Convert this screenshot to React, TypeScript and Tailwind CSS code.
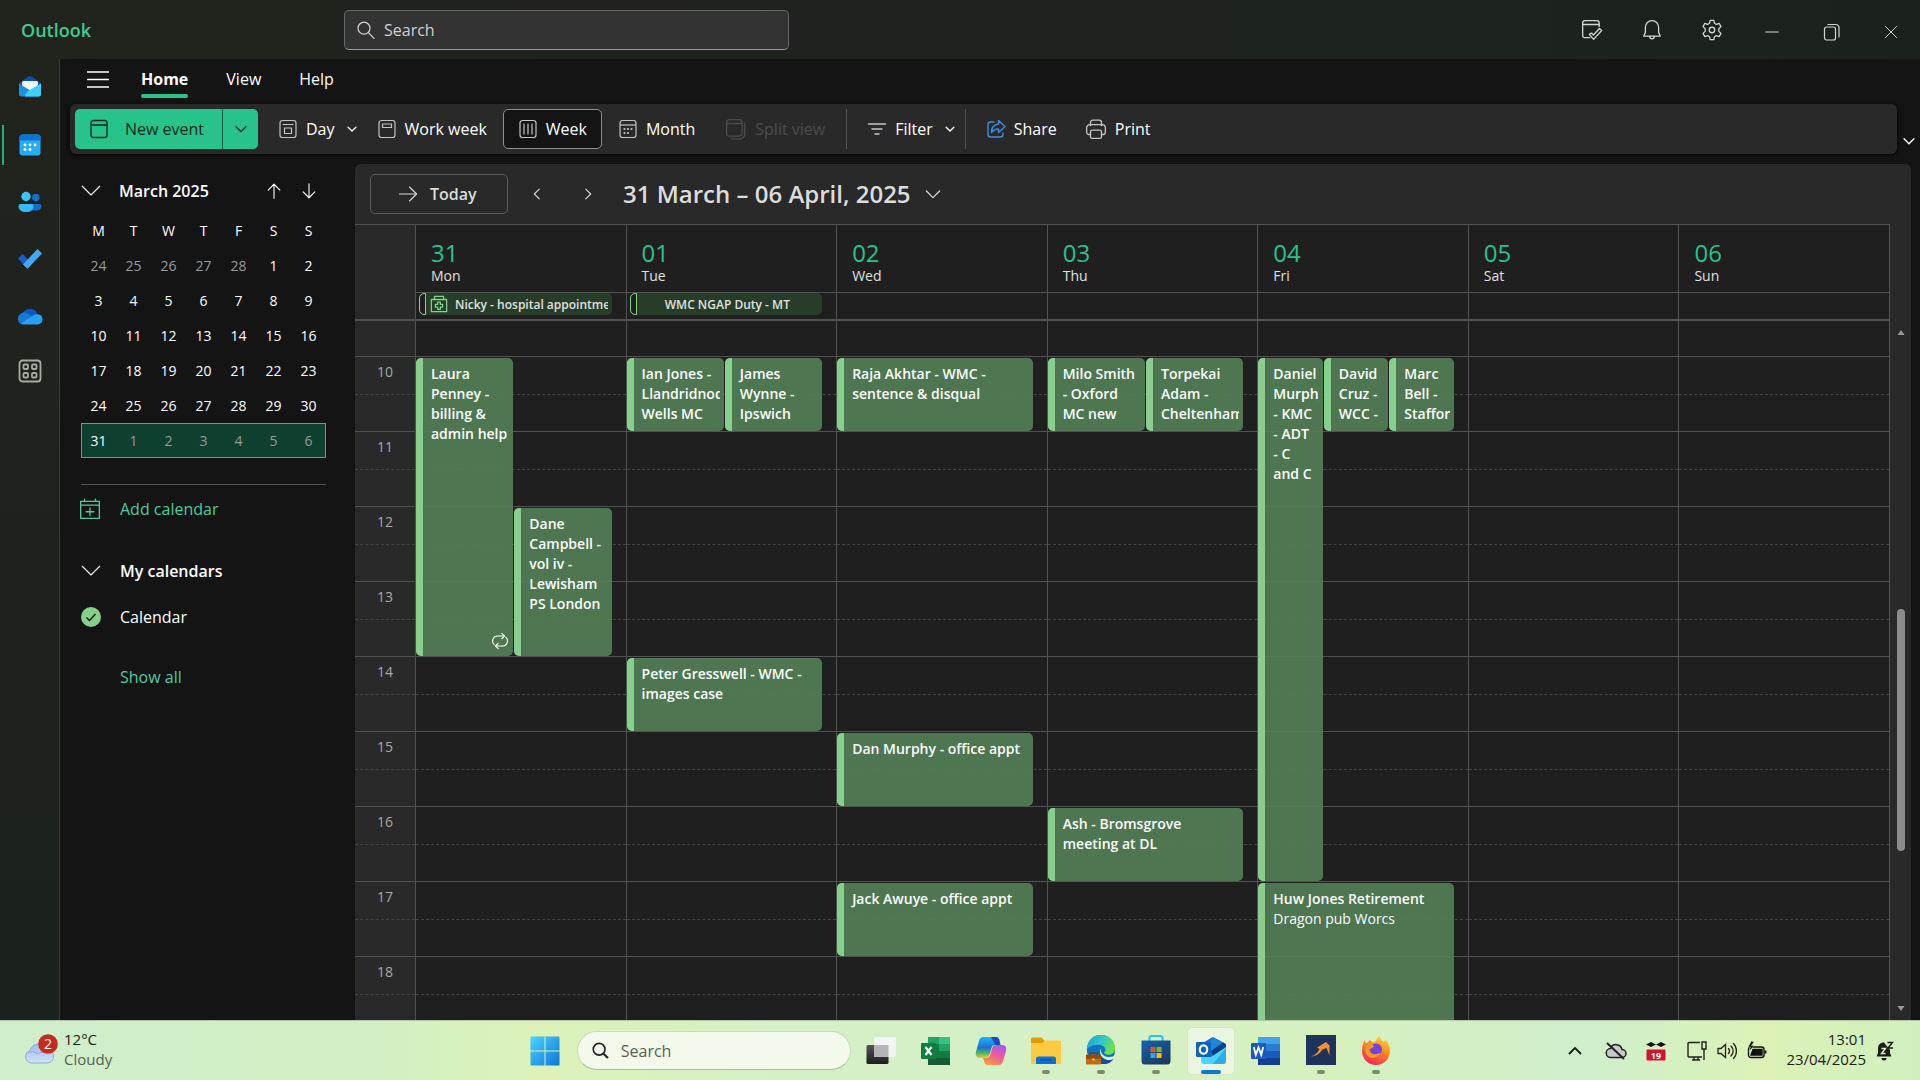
import React from "react";

type P = { d: string | string[]; s?: number; w?: number; c?: string };

function Line({ d, s = 20, w = 1.2, c = "" }: P) {
  const paths = Array.isArray(d) ? d : [d];
  return (
    <svg width={s} height={s} viewBox="0 0 20 20" fill="none" stroke="currentColor" strokeWidth={w} strokeLinecap="round" strokeLinejoin="round" className={"shrink-0 " + c} aria-hidden="true">
      {paths.map((p, i) => (
        <path key={i} d={p} />
      ))}
    </svg>
  );
}

const FRAME = "M4.5 1.5h11a2.5 2.5 0 0 1 2.5 2.5v12a2.5 2.5 0 0 1-2.5 2.5h-11A2.5 2.5 0 0 1 2 16V4a2.5 2.5 0 0 1 2.5-2.5z";
const I = {
  search: ["M8 2.2a6 6 0 1 1 0 12a6 6 0 0 1 0-12z", "M12.4 12.6L18 18.4"],
  down: "M4.5 7.5L10 13l5.5-5.5",
  left: "M12.5 4.5L7 10l5.5 5.5",
  right: "M7.5 4.5L13 10l-5.5 5.5",
  up: "M4.5 12.5L10 7l5.5 5.5",
  arrowRight: ["M1.5 10h17", "M11.5 3l7 7l-7 7"],
  arrowUp: ["M10 18V2.5", "M3.5 9L10 2.5L16.500 9"],
  arrowDown: ["M10 2v15.500", "M3.500 11L10 17.500L16.500 11"],
  cal: [FRAME, "M2 6h16"],
  day: [FRAME, "M5 5.500h10", "M6.500 9h7v5.500h-7z"],
  workWeek: [FRAME, "M5.500 5h9v3.500h-9z"],
  week: [FRAME, "M6 5v10M10 5v10M14 5v10"],
  split: ["M4 1.500h9a2.500 2.500 0 0 1 2.500 2.500v10a2.500 2.500 0 0 1-2.500 2.500H4A2.500 2.500 0 0 1 1.500 14V4A2.500 2.500 0 0 1 4 1.500z", "M1.500 5h14", "M18 4.500v10a4.500 4.500 0 0 1-4.500 4.500H6"],
  filter: ["M1.500 5h17", "M5 10h10", "M8 15h4"],
  share: ["M8 3H4.500A2.500 2.500 0 0 0 2 5.500v10A2.500 2.500 0 0 0 4.500 18h10a2.500 2.500 0 0 0 2.500-2.500V14", "M12.500 1.500L19 7.500l-6.500 6V10c-3 0-5 1-7 3.500C5.500 8.500 8 5.500 12.500 5z"],
  print: ["M5 7V4a2 2 0 0 1 2-2h6a2 2 0 0 1 2 2v3", "M5 15H3.500A2 2 0 0 1 1.500 13V9A3 3 0 0 1 4.500 6h11a3 3 0 0 1 3 3v4a2 2 0 0 1-2 2H15", "M6.500 11h7A1.500 1.500 0 0 1 15 12.500V17a1.500 1.500 0 0 1-1.500 1.500h-7A1.500 1.500 0 0 1 5 17v-4.500A1.500 1.500 0 0 1 6.500 11z"],
  myDay: ["M8 17H3.500A2 2 0 0 1 1.500 15V3.500a2 2 0 0 1 2-2h11a2 2 0 0 1 2 2V7", "M1.500 5h15", "M7.500 14l2-1.200l1.800 1.800l5.500-6L18.800 10.500L11.500 18.500z"],
  bell: ["M10 1.500a6 6 0 0 0-6 6V12l-1.500 3.500h15L16 12V7.500a6 6 0 0 0-6-6z", "M8 16a2 2 0 0 0 4 0"],
  min: "M3 10h14",
  restore: ["M4.500 5h7a2 2 0 0 1 2 2v9a2 2 0 0 1-2 2h-7a2 2 0 0 1-2-2V7a2 2 0 0 1 2-2z", "M6 2.500h7.500a3.500 3.500 0 0 1 3.500 3.500v9"],
  close: "M3 3l14 14M17 3L3 17",
  addCal: ["M1.500 3h17v15.500h-17z", "M1.500 6.500h17", "M5 1v2M15 1v2", "M10 9v7M6.500 12.500h7"],
  repeat: ["M12 1.500l3 3l-3 3", "M15 4.500H7.500A5.500 5.500 0 0 0 3.500 14", "M8 18.500l-3-3l3-3", "M5 15.500h7.500A5.500 5.500 0 0 0 16.500 6"],
  medical: ["M1.500 5h17v13.500h-17z", "M5 5V1.500h10V5", "M8.500 8h3v2.500H14v3h-2.500V16h-3v-2.500H6v-3h2.500z"],
};

function Gear() {
  return (
    <svg width="22" height="22" viewBox="0 0 24 24" fill="none" stroke="currentColor" strokeWidth="1.400" strokeLinejoin="round" aria-hidden="true">
      <path d="M10 1.500h4l.7 3.200l2 1.100l3.100-1l2 3.500L19.400 10.500v3l2.400 2.200l-2 3.500l-3.100-1l-2 1.100L14 22.500h-4l-.7-3.200l-2-1.100l-3.100 1l-2-3.500l2.400-2.200v-3L2.200 8.300l2-3.500l3.100 1l2-1.100z" />
      <circle cx="12" cy="12" r="3" />
    </svg>
  );
}

function MonthDots() {
  return (
    <svg width="20" height="20" viewBox="0 0 20 20" fill="none" stroke="currentColor" strokeWidth="1.200" aria-hidden="true">
      <path d={FRAME} />
      <path d="M2 6h16" />
      <g fill="currentColor" stroke="none">
        <circle cx="6.500" cy="10" r="1.100" /><circle cx="10" cy="10" r="1.100" /><circle cx="13.500" cy="10" r="1.100" />
        <circle cx="6.500" cy="14" r="1.100" /><circle cx="10" cy="14" r="1.100" />
      </g>
    </svg>
  );
}

/* ---------- App rail ---------- */
function RailIcons() {
  return [
    <svg key="mail" width="24" height="24" viewBox="0 0 24 24">
      <path d="M1 9L10.500 2.500a3 3 0 0 1 3 0L23 9v7H1z" fill="#0b4fae" />
      <rect x="4" y="7" width="16" height="11" rx="1.500" fill="#f4f8ff" />
      <path d="M1 9.500l11 6.500l11-6.500V20a2.500 2.500 0 0 1-2.500 2.500h-17A2.500 2.500 0 0 1 1 20z" fill="#1a8fe3" />
      <path d="M5 8h14v4l-7 4l-7-4z" fill="#f4f8ff" />
      <path d="M23 9.500V20a2.500 2.500 0 0 1-2.500 2.500H7c0-3 2-5 5-6.500z" fill="#3fd0fb" />
    </svg>,
    <svg key="cal" width="24" height="24" viewBox="0 0 24 24">
      <rect x="1.500" y="1.500" width="21" height="21" rx="3" fill="#22aef5" />
      <path d="M1.500 7.500v-3a3 3 0 0 1 3-3h15a3 3 0 0 1 3 3v3z" fill="#0f73d4" />
      <g fill="#fff">
        <circle cx="7" cy="12" r="1.400" /><circle cx="12" cy="12" r="1.400" /><circle cx="17" cy="12" r="1.400" />
        <circle cx="7" cy="16.500" r="1.400" /><circle cx="12" cy="16.500" r="1.400" />
      </g>
    </svg>,
    <svg key="people" width="24" height="24" viewBox="0 0 24 24">
      <circle cx="17.800" cy="7.500" r="3.700" fill="#0b6fd0" />
      <path d="M13 14h8.500a2 2 0 0 1 2 2c0 3-2.500 4.500-5.500 4.500h-5z" fill="#0b6fd0" />
      <circle cx="8" cy="6.500" r="4.700" fill="#3cc3fa" />
      <path d="M2.500 14h11a2 2 0 0 1 2 2c0 4-3 6-7.500 6s-7.500-2-7.500-6a2 2 0 0 1 2-2z" fill="#35b9f5" />
    </svg>,
    <svg key="todo" width="26" height="24" viewBox="0 0 26 24">
      <path d="M1 11.500L5.500 7L14.500 16L10 21.500z" fill="#1c5bc2" />
      <path d="M6 17.500L20.500 2L25 6.500L10.500 21.800z" fill="#46a8f5" />
    </svg>,
    <svg key="drive" width="26" height="24" viewBox="0 0 26 24">
      <path d="M5 12a8 7.500 0 0 1 15.500-2L13 16z" fill="#0a5bbd" />
      <path d="M1 15.500A6 6 0 0 1 10 9.500L18 14L6 20.500A5 5 0 0 1 1 15.500z" fill="#1679d8" />
      <path d="M4 19.500L17 11a6 6 0 0 1 4-.8a5.200 5.200 0 0 1 0 10.300H6.500z" fill="#2a9fee" />
    </svg>,
    <svg key="apps" width="24" height="24" viewBox="0 0 24 24" fill="none" stroke="#a8aaa4" strokeWidth="1.800">
      <rect x="1.500" y="1.500" width="21" height="21" rx="3" />
      <rect x="5.500" y="5.500" width="4.500" height="4.500" rx="1" /><rect x="14" y="5.500" width="4.500" height="4.500" rx="1" />
      <rect x="5.500" y="14" width="4.500" height="4.500" rx="1" /><rect x="14" y="14" width="4.500" height="4.500" rx="1" />
    </svg>,
  ];
}
const railNames = ["Mail", "Calendar", "People", "To Do", "OneDrive", "More apps"];

/* ---------- Data ---------- */
const month: string[][] = [
  ["24", "25", "26", "27", "28", "1", "2"],
  ["3", "4", "5", "6", "7", "8", "9"],
  ["10", "11", "12", "13", "14", "15", "16"],
  ["17", "18", "19", "20", "21", "22", "23"],
  ["24", "25", "26", "27", "28", "29", "30"],
  ["31", "1", "2", "3", "4", "5", "6"],
];

type Ev = { t: string; place?: string; from: number; to: number; lane?: number; span?: number; repeat?: boolean };
type Day = { n: string; name: string; lanes: number; allDay?: { t: string; icon?: boolean }; ev: Ev[] };

const days: Day[] = [
  { n: "31", name: "Mon", lanes: 2, allDay: { t: "Nicky - hospital appointment", icon: true }, ev: [
    { t: "Laura Penney - billing & admin help", from: 10, to: 14, repeat: true },
    { t: "Dane Campbell - vol iv - Lewisham PS London", from: 12, to: 14, lane: 2 },
  ] },
  { n: "01", name: "Tue", lanes: 2, allDay: { t: "WMC NGAP Duty - MT" }, ev: [
    { t: "Ian Jones - Llandridnod Wells MC", from: 10, to: 11 },
    { t: "James Wynne - Ipswich", from: 10, to: 11, lane: 2 },
    { t: "Peter Gresswell - WMC - images case", from: 14, to: 15, span: 2 },
  ] },
  { n: "02", name: "Wed", lanes: 1, ev: [
    { t: "Raja Akhtar - WMC - sentence & disqual", from: 10, to: 11 },
    { t: "Dan Murphy - office appt", from: 15, to: 16 },
    { t: "Jack Awuye - office appt", from: 17, to: 18 },
  ] },
  { n: "03", name: "Thu", lanes: 2, ev: [
    { t: "Milo Smith - Oxford MC new", from: 10, to: 11 },
    { t: "Torpekai Adam - Cheltenham", from: 10, to: 11, lane: 2 },
    { t: "Ash - Bromsgrove meeting at DL", from: 16, to: 17, span: 2 },
  ] },
  { n: "04", name: "Fri", lanes: 3, ev: [
    { t: "Daniel Murphy - KMC - ADT\n- C\nand C", from: 10, to: 17 },
    { t: "David Cruz - WCC -", from: 10, to: 11, lane: 2 },
    { t: "Marc Bell - Stafford", from: 10, to: 11, lane: 3 },
    { t: "Huw Jones Retirement", place: "Dragon pub Worcs", from: 17, to: 19, span: 3 },
  ] },
  { n: "05", name: "Sat", lanes: 1, ev: [] },
  { n: "06", name: "Sun", lanes: 1, ev: [] },
];
const hours = [10, 11, 12, 13, 14, 15, 16, 17, 18];
const weekCols = "grid grid-cols-[60px_repeat(7,minmax(0,1fr))]";

function EventCard({ e }: { e: Ev }) {
  const lane = e.lane ?? 1;
  return (
    <div
      className="z-10 mt-0.5 mr-px flex min-w-0 overflow-hidden rounded-[5px] bg-[#528056]/90 text-sm leading-5 text-white"
      style={{ gridRow: `${e.from - 8} / ${e.to - 8}`, gridColumn: `${lane} / span ${e.span ?? 1}` }}
    >
      <div className="w-[7px] shrink-0 bg-[#86cf8c]" />
      <div className="mr-1 flex min-w-0 flex-1 flex-col overflow-hidden pt-1.5 pl-2">
        <p className="font-semibold whitespace-pre-line">{e.t}</p>
        {e.place && <p>{e.place}</p>}
        {e.repeat && <Line d={I.repeat} s={18} c="mt-auto mb-1.5 self-end" />}
      </div>
    </div>
  );
}

function Tool({ icon, label, menu, off, className = "" }: { icon: React.ReactNode; label: string; menu?: boolean; off?: boolean; className?: string }) {
  return (
    <button disabled={off} className={"flex h-10 items-center gap-2 whitespace-nowrap " + (off ? "text-[#4c4c4c] " : "text-white ") + className}>
      <span className={off ? "" : "text-[#c4c4c4]"}>{icon}</span>
      <span className={off ? "" : "font-medium"}>{label}</span>
      {menu && <Line d={I.down} s={14} w={2} c="ml-0.5" />}
    </button>
  );
}

/* ---------- Taskbar icons ---------- */
const taskApps: { name: string; run?: boolean; active?: boolean; svg: React.ReactNode }[] = [
  { name: "Task view", svg: (
    <svg width="30" height="30" viewBox="0 0 30 30">
      <defs><linearGradient id="tv" x1="0" y1="0" x2="0" y2="1"><stop offset="0" stopColor="#555" /><stop offset="1" stopColor="#1e1e1e" /></linearGradient></defs>
      <rect x="0.500" y="9" width="22" height="19" rx="1.500" fill="url(#tv)" />
      <rect x="8" y="1" width="22" height="20" rx="1.500" fill="#f4f4f4" />
      <path d="M8 9h14.500v12H8z" fill="#b5b5b5" />
    </svg>) },
  { name: "Excel", svg: (
    <svg width="30" height="30" viewBox="0 0 30 30">
      <path d="M7 1h11v14H7z" fill="#21a366" /><path d="M18 1h11v7H18z" fill="#33c481" /><path d="M18 8h11v7H18z" fill="#21a366" />
      <path d="M7 8h11v7H7z" fill="#107c41" /><path d="M7 15h22v7H7z" fill="#107c41" /><path d="M7 22h22v7H7z" fill="#185c37" />
      <rect x="0" y="7" width="15" height="16" rx="1.200" fill="#107c41" />
      <path d="M4.500 11l6 8M10.500 11l-6 8" stroke="#fff" strokeWidth="2.200" />
    </svg>) },
  { name: "Copilot", svg: (
    <svg width="32" height="32" viewBox="0 0 32 32">
      <defs>
        <linearGradient id="cp1" x1="0" y1="0" x2="0" y2="1"><stop offset="0" stopColor="#1cb5f5" /><stop offset=".5" stopColor="#1d6fd8" /><stop offset=".75" stopColor="#45b368" /><stop offset="1" stopColor="#e5d128" /></linearGradient>
        <linearGradient id="cp2" x1="0.800" y1="0" x2="0.300" y2="1"><stop offset="0" stopColor="#9b5cf0" /><stop offset=".5" stopColor="#ee5a9e" /><stop offset="1" stopColor="#fb9a3c" /></linearGradient>
      </defs>
      <path d="M8 2h12c2.500 0 3.500 1.500 4 4l1 4h-5c-2 0-3 1-3.500 3l-2 7c-.7 2-2 3-4 3H5c-3 0-5-2-4-6L4 6c.8-2.500 2-4 4-4z" fill="url(#cp1)" />
      <path d="M16 2h5c2 0 3 1.500 3.500 3.500l1 4.500h-5z" fill="#1b48c4" />
      <path d="M24 30H13c-2.500 0-3.500-1.500-4-4l-.8-3h3c2 0 3.500-1 4-3l2-7c.7-2 2-3 4-3H27c3 0 5 2 4 6l-3 10c-.8 2.500-2 4-4 4z" fill="url(#cp2)" />
    </svg>) },
  { name: "File Explorer", run: true, svg: (
    <svg width="30" height="30" viewBox="0 0 30 30">
      <path d="M0 4a1.500 1.500 0 0 1 1.500-1.500h9L14 6h16v6H0z" fill="#e09a0c" />
      <path d="M0 8h11l3-2.500h14.500A1.500 1.500 0 0 1 30 7v20.500a1.500 1.500 0 0 1-1.500 1.500h-27A1.500 1.500 0 0 1 0 27.500z" fill="#fdcb41" />
      <path d="M5 29v-5a2.500 2.500 0 0 1 2.500-2.500h15A2.500 2.500 0 0 1 25 24v5z" fill="#0c72d2" /><path d="M9 25h12" stroke="#07529d" strokeWidth="1.500" />
    </svg>) },
  { name: "Edge", run: true, svg: (
    <svg width="30" height="30" viewBox="0 0 32 32">
      <defs>
        <linearGradient id="ed1" x1="0" y1="0" x2="1" y2=".4"><stop offset="0" stopColor="#1a9fdc" /><stop offset=".6" stopColor="#35c8c4" /><stop offset="1" stopColor="#6be04f" /></linearGradient>
      </defs>
      <circle cx="16" cy="16" r="15" fill="#0f6fc0" />
      <path d="M1 15A15 15 0 0 1 31 14c0 5-3.500 7-7.500 7c-3 0-4.500-1-4-2.500c3-3.500-.5-8-6.500-8C7 10.500 3 13 1 15z" fill="url(#ed1)" />
      <path d="M16.500 14c-2 5 2 9 7 9.500c3.500.2 6-.6 9-2v4c-2 1-3 1.500-4 1.700c-7 .5-13-3-13.500-8.500c0-2 .5-3.700 1.500-4.700z" fill="#d4f0c4" />
      <path d="M16 23c3 4 8 5 13.500 2.500C26 30.500 20 32 15 30.500z" fill="#174f9c" />
      <rect x="0" y="21" width="16" height="10.500" rx="1" fill="#c26a12" /><path d="M0 21h16v4.500H0z" fill="#934a0a" /><path d="M4 21v-1.500h8V21" stroke="#7d3e05" fill="none" strokeWidth="1.500" /><circle cx="8" cy="26" r="1.200" fill="#ffdc74" />
    </svg>) },
  { name: "Microsoft Store", run: true, svg: (
    <svg width="30" height="30" viewBox="0 0 30 30">
      <defs><linearGradient id="st" x1="0" y1="0" x2=".6" y2="1"><stop offset="0" stopColor="#1066b0" /><stop offset="1" stopColor="#1e3a63" /></linearGradient></defs>
      <path d="M8.500 6V3a2 2 0 0 1 2-2h9a2 2 0 0 1 2 2v3" fill="none" stroke="#2cc0f2" strokeWidth="2" />
      <path d="M.5 5.500h29V26a3.500 3.500 0 0 1-3.500 3.500H4A3.500 3.500 0 0 1 .5 26z" fill="url(#st)" />
      <path d="M9.500 12h5v5h-5z" fill="#f25022" /><path d="M15.500 12h5v5h-5z" fill="#7fba00" /><path d="M9.500 18h5v5h-5z" fill="#28a8ea" /><path d="M15.500 18h5v5h-5z" fill="#ffb900" />
    </svg>) },
  { name: "Outlook", run: true, active: true, svg: (
    <svg width="30" height="30" viewBox="0 0 30 30">
      <path d="M5 9L16 2.500a2 2 0 0 1 2 0L30 9v17H5z" fill="#0f6cc4" />
      <path d="M8 12L17 3l12 5.500L17 18z" fill="#1b86dc" /><path d="M15 16L27 7.500L30 10v4l-12 8z" fill="#0b3f80" />
      <path d="M5 18l10 4l15-10v14a3 3 0 0 1-3 3H8a3 3 0 0 1-3-3z" fill="#4fd2f8" /><path d="M17 29L30 13v13a3 3 0 0 1-3 3z" fill="#2aaeee" />
      <rect x="0" y="7" width="15" height="15" rx="1.200" fill="#0b63bd" />
      <ellipse cx="7.500" cy="14.500" rx="3.700" ry="4.200" fill="none" stroke="#fff" strokeWidth="2.200" />
    </svg>) },
  { name: "Word", svg: (
    <svg width="30" height="30" viewBox="0 0 30 30">
      <path d="M7 1h22v7H7z" fill="#41a5ee" /><path d="M7 8h22v7H7z" fill="#2b7cd3" /><path d="M7 15h22v7H7z" fill="#185abd" /><path d="M7 22h22v7H7z" fill="#103f91" />
      <rect x="0" y="7" width="15" height="16" rx="1.200" fill="#185abd" />
      <path d="M2.800 11l2 8l2.700-7.500l2.700 7.500l2-8" fill="none" stroke="#fff" strokeWidth="1.800" />
    </svg>) },
  { name: "Case manager", run: true, svg: (
    <svg width="30" height="30" viewBox="0 0 30 30">
      <path d="M0 0h30v30H0z" fill="#1f335a" /><path d="M5 21.500c4-1.500 7-4 8.500-7.500L11 12.500L20 7l3.500 3.500v10L20.500 13l-4 1.500c-3 4.500-6.500 6.500-11.500 7z" fill="#f7902f" />
    </svg>) },
  { name: "Firefox", run: true, svg: (
    <svg width="30" height="30" viewBox="0 0 30 30">
      <defs><linearGradient id="ff" x1=".8" y1="0" x2=".3" y2="1"><stop offset="0" stopColor="#ffe141" /><stop offset=".45" stopColor="#ff8a1f" /><stop offset="1" stopColor="#f0245c" /></linearGradient></defs>
      <path d="M4 5c0 1.500.5 2.500 1 3.500C7 7 8 6 8.500 4.500C9.500 6 11 7 13 7.500L15 6c1-2.500 2-4 3.500-5.500C19 4 21 5.500 22.500 7l2-2C28 9 29 12 29 16a14 14 0 0 1-28 0C1 11.500 2 8 4 5z" fill="url(#ff)" />
      <circle cx="15" cy="14.500" r="6" fill="#7542e5" /><path d="M5 11c3-2.500 6-1.500 8 0c-1 2.500-4.500 2-4.500 4c0 4 6 6 11 2.500c-2 5.500-8 7-12 4C4.500 19 4 15 5 11z" fill="#ff9a2b" />
    </svg>) },
];

export default function App() {
  return (
    <div className="flex h-screen w-full flex-col overflow-hidden bg-[#141414] text-base text-white font-['Open_Sans','Noto_Sans',sans-serif]">
      <header className="flex h-[59px] shrink-0 items-center bg-linear-to-r from-[#21231d] to-[#1b221c]">
        <h1 className="w-[344px] shrink-0 pl-[21px] text-lg font-semibold text-[#3ecb92]">Outlook</h1>
        <label className="flex h-10 w-[445px] items-center gap-2 rounded-[5px] border border-[#666] border-b-[#999] bg-[#333] px-[11px]">
          <Line d={I.search} s={20} c="text-[#d6d6d6]" />
          <input aria-label="Search" placeholder="Search" className="w-full bg-transparent text-base outline-none placeholder:text-[#d0d0d0]" />
        </label>
        <div className="ml-auto flex text-[#d4d6d0]">
          {[
            { n: "My Day", i: <Line d={I.myDay} s={22} /> },
            { n: "Notifications", i: <Line d={I.bell} s={22} /> },
            { n: "Settings", i: <Gear /> },
            { n: "Minimise", i: <Line d={I.min} s={18} c="mt-1" /> },
            { n: "Restore", i: <Line d={I.restore} s={20} c="mt-1" /> },
            { n: "Close", i: <Line d={I.close} s={16} c="mt-1" /> },
          ].map((b) => (
            <button key={b.n} aria-label={b.n} className="grid h-[59px] w-[60px] place-items-center last:w-[58px]">{b.i}</button>
          ))}
        </div>
      </header>

      <div className="flex min-h-0 flex-1">
        <nav className="flex w-[60px] shrink-0 flex-col border-r border-[#3a3b39] bg-linear-to-b from-[#21231d] to-[#1b211d]">
          {RailIcons().map((ic, i) => (
            <button key={i} aria-label={railNames[i]} className="flex h-[57px] w-full items-center first:pb-1 last:pb-1">
              <span className={"h-10 w-0.5 ml-0.5 " + (i === 1 ? "bg-[#27b07c]" : "")} />
              <span className="grid flex-1 place-items-center pr-1">{ic}</span>
            </button>
          ))}
        </nav>

        <main className="flex min-w-0 flex-1 flex-col">
          <div className="flex h-[45px] shrink-0 items-start pl-[27px]">
            <button aria-label="Menu" className="mt-3">
              <svg width="22" height="20" viewBox="0 0 22 20" stroke="#fff" strokeWidth="1.500"><path d="M0 1h22M0 8.500h22M0 16h22" /></svg>
            </button>
            <div className="ml-8 flex gap-[38px] pt-2 leading-6">
              <button className="flex flex-col font-bold"><span>Home</span><span className="mt-[3px] h-1 w-full rounded-full bg-[#27c38a]" /></button>
              <button className="h-6">View</button>
              <button className="h-6">Help</button>
            </div>
          </div>

          <div className="flex shrink-0 items-end">
            <div className="ml-2.5 flex h-[50px] min-w-0 flex-1 items-center rounded-md bg-[#292929] pl-[5px] shadow-[0_1px_4px_#000]">
              <div className="flex h-10 overflow-hidden rounded-[5px] bg-[#27c38a] text-[#11281e]">
                <button className="flex w-[148px] items-center gap-4 whitespace-nowrap border-r border-[#125a40] pl-3.5 font-medium"><Line d={I.cal} s={20} w={1.300} />New event</button>
                <button aria-label="New event options" className="grid w-[35px] place-items-center"><Line d={I.down} s={18} w={1.400} /></button>
              </div>
              <Tool className="ml-5" icon={<Line d={I.day} />} label="Day" menu />
              <Tool className="ml-[18px]" icon={<Line d={I.workWeek} />} label="Work week" />
              <Tool className="ml-4 rounded-[5px] border border-[#8f8f8f] bg-[#141414] px-3.5" icon={<Line d={I.week} />} label="Week" />
              <Tool className="ml-4" icon={<MonthDots />} label="Month" />
              <Tool className="ml-[30px]" off icon={<Line d={I.split} s={22} />} label="Split view" />
              <span className="ml-[21px] h-10 w-px bg-[#525252]" />
              <Tool className="ml-5" icon={<Line d={I.filter} w={1.500} />} label="Filter" menu />
              <span className="ml-2 h-10 w-px bg-[#525252]" />
              <Tool className="ml-5" icon={<Line d={I.share} c="text-[#3b8fdb]" w={1.400} />} label="Share" />
              <Tool className="ml-7" icon={<Line d={I.print} s={22} />} label="Print" />
            </div>
            <button aria-label="Ribbon options" className="grid w-[23px] place-items-center pb-1"><Line d={I.down} s={18} w={1.500} /></button>
          </div>

          <div className="flex min-h-0 flex-1 pt-2.5">
            <aside className="flex w-[295px] shrink-0 flex-col pl-[21px] pr-[29px] pt-[5px]">
              <div className="flex h-11 items-center">
                <svg width="20" height="20" viewBox="0 0 20 20" fill="none" stroke="currentColor" strokeWidth="1.200" aria-hidden="true"><path d="M1 5l9 9l9-9" /></svg>
                <h2 className="ml-[18px] text-base font-semibold">March 2025</h2>
                <button aria-label="Previous month" className="ml-auto"><Line d={I.arrowUp} s={18} /></button>
                <button aria-label="Next month" className="ml-[17px] mr-2"><Line d={I.arrowDown} s={18} /></button>
              </div>
              <table className="w-full table-fixed border-collapse text-center text-sm">
                <thead><tr className="h-[35px]">{["M", "T", "W", "T", "F", "S", "S"].map((d, i) => <th key={i} className="p-0 font-medium">{d}</th>)}</tr></thead>
                <tbody>
                  {month.map((r, i) => (
                    <tr key={i} className={"h-[35px] " + (i === 5 ? "bg-[#0e4030] outline outline-[#8a8a8a] -outline-offset-1" : "")}>
                      {r.map((d, j) => (
                        <td key={j} className={"p-0 " + ((i === 0 && j < 5) || (i === 5 && j > 0) ? "text-[#999]" : "font-medium")}>{d}</td>
                      ))}
                    </tr>
                  ))}
                </tbody>
              </table>
              <hr className="mt-[26px] border-[#525252]" />
              <button className="mt-2 flex h-8 items-center gap-[19px] text-[#4fcb9c]"><Line d={I.addCal} s={22} c="-ml-0.5" />Add calendar</button>
              <button className="mt-[30px] flex h-8 items-center gap-[19px] font-semibold">
                <svg width="20" height="20" viewBox="0 0 20 20" fill="none" stroke="currentColor" strokeWidth="1.200" aria-hidden="true"><path d="M1 5l9 9l9-9" /></svg>
                My calendars
              </button>
              <label className="mt-[14px] flex h-8 items-center gap-[19px]">
                <input type="checkbox" defaultChecked className="peer sr-only" />
                <svg width="20" height="20" viewBox="0 0 20 20" aria-hidden="true"><circle cx="10" cy="10" r="10" fill="#86cf8c" /><path d="M5.500 10.500l3 3l6-6.500" fill="none" stroke="#141414" strokeWidth="1.400" /></svg>
                Calendar
              </label>
              <a href="#all" className="mt-7 ml-[39px] flex h-8 items-center text-[#4fcb9c]">Show all</a>
            </aside>

            <section className="mr-[9px] flex min-w-0 flex-1 flex-col overflow-hidden rounded-t-md bg-[#292929]">
              <div className="flex h-[60px] shrink-0 items-center pl-[15px] text-[#dcdcdc]">
                <button className="flex h-10 w-[138px] items-center gap-3 rounded-[5px] border border-[#5c5c5c] pl-[27px] font-semibold"><Line d={I.arrowRight} s={20} w={1.100} />Today</button>
                <button aria-label="Previous week" className="ml-5"><Line d={I.left} s={18} /></button>
                <button aria-label="Next week" className="ml-[33px]"><Line d={I.right} s={18} /></button>
                <button className="ml-[26px] flex items-center gap-2.5 text-2xl font-semibold whitespace-nowrap">31 March – 06 April, 2025<Line d={I.down} s={24} w={1} /></button>
              </div>

              <div className="mr-[21px] shrink-0 border-t border-r border-[#525252]">
                <div className={weekCols}>
                  <div />
                  {days.map((d) => (
                    <div key={d.n} className="h-[67px] border-l border-[#525252] bg-[#1f1f1f] pt-3.5 pl-[15px]">
                      <p className="text-2xl leading-7 text-[#27c38a]">{d.n}</p>
                      <p className="text-sm leading-[18px] text-[#e0e0e0]">{d.name}</p>
                    </div>
                  ))}
                </div>
                <div className={weekCols}>
                  <div />
                  {days.map((d) => (
                    <div key={d.n} className="h-[27px] border-t border-l border-[#525252] bg-[#1f1f1f] pr-[14px] pl-[3px]">
                      {d.allDay && (
                        <div className="flex h-[22px] items-center rounded-[5px] bg-[#283d29] text-xs font-semibold text-[#e0e0e0]">
                          <span className="h-full w-[7px] shrink-0 rounded-l-[5px] border border-[#86cf8c] bg-[#1f1f1f]" />
                          {d.allDay.icon && <Line d={I.medical} s={18} w={1.400} c="ml-1 text-[#86cf8c]" />}
                          <span className={"mr-1 min-w-0 flex-1 overflow-hidden pt-0.5 whitespace-nowrap " + (d.allDay.icon ? "ml-[7px]" : "text-center")}>{d.allDay.t}</span>
                        </div>
                      )}
                    </div>
                  ))}
                </div>
              </div>
              <div className="mr-[21px] h-0.5 shrink-0 bg-[#525252]" />

              <div className="flex min-h-0 flex-1 overflow-hidden">
                <div className={weekCols + " min-w-0 flex-1 self-start border-r border-[#525252]"}>
                  <div className="pt-[35px]">
                    {hours.map((h) => (
                      <div key={h} className="h-[75px] border-t border-[#525252] pt-[5px] text-center text-sm leading-5 text-[#a8a8a8]">
                        {h}
                        <div className="mt-3 border-t border-dashed border-[#424242]" />
                      </div>
                    ))}
                  </div>
                  {days.map((d) => (
                    <div
                      key={d.n}
                      className="grid grid-rows-[35px_repeat(9,75px)] border-l border-[#525252] bg-[#1f1f1f]"
                      style={{ gridTemplateColumns: `repeat(${d.lanes}, minmax(0, 1fr)) 13px` }}
                    >
                      {hours.map((h) => (
                        <div key={h} className="flex flex-col border-t border-[#525252]" style={{ gridColumn: "1 / -1", gridRow: h - 8 }}>
                          <div className="h-[37px]" />
                          <div className="flex-1 border-t border-dashed border-[#424242]" />
                        </div>
                      ))}
                      {d.ev.map((e) => <EventCard key={e.t} e={e} />)}
                    </div>
                  ))}
                </div>
                <div className="flex w-[21px] shrink-0 flex-col items-center py-2 text-[#9a9a9a]">
                  <svg width="8" height="8" viewBox="0 0 8 8" fill="currentColor"><path d="M4 1l3.500 5h-7z" /></svg>
                  <div className="flex-[272]" />
                  <div className="w-2 flex-[243] rounded-full bg-[#8c8c8c]" />
                  <div className="flex-[153]" />
                  <svg width="8" height="8" viewBox="0 0 8 8" fill="currentColor"><path d="M4 7L.5 2h7z" /></svg>
                </div>
              </div>
            </section>
          </div>
        </main>
      </div>

      <footer className="grid h-[60px] shrink-0 grid-cols-[1fr_auto_1fr] items-center border-t border-[#b4c4a6] bg-[linear-gradient(90deg,#cfeecb,#d3f0c4_20%,#dcf2b8_28%,#d4f0c8_42%,#d6f0c0_70%,#cfeecb_83%,#dcf2b5_92%,#d0efc0)] text-[#1c201a]">
        <button className="flex items-center gap-1.5 pb-1 pl-6 text-left text-[15px] leading-5">
          <svg width="34" height="30" viewBox="0 0 34 30" aria-hidden="true">
            <defs><linearGradient id="cl" x1="0" y1="0" x2="0" y2="1"><stop offset="0" stopColor="#9fbcf3" /><stop offset="1" stopColor="#d4e2fa" /></linearGradient></defs>
            <path d="M7 29a6.500 6.500 0 0 1-1-12.500a9 9 0 0 1 17-1a6.800 6.800 0 0 1 1 13.500z" fill="url(#cl)" stroke="#8caee8" />
            <path d="M4 19c3-2 7-2 9 1c3-2 7-2 10 0" fill="none" stroke="#86a8e8" />
            <circle cx="24" cy="10" r="9.800" fill="#c42b1c" />
            <text x="24" y="15" textAnchor="middle" fontSize="14" fill="#fff">2</text>
          </svg>
          <span><span className="block">12°C</span><span className="block text-[#566052]">Cloudy</span></span>
        </button>
        <div className="flex items-center">
          <button aria-label="Start" className="grid w-[55px] place-items-center">
            <svg width="30" height="30" viewBox="0 0 30 30">
              <defs><linearGradient id="wn" x1="0" y1="0" x2="1" y2="1" gradientUnits="objectBoundingBox"><stop offset="0" stopColor="#4fd2ff" /><stop offset="1" stopColor="#0a78d6" /></linearGradient></defs>
              <path d="M1 .5h13.500v14H.5V1zM15.500.5H29l.5.5v13.500h-14zM.5 15.500h14v14H1l-.5-.5zM15.500 15.500h14V29l-.5.500H15.500z" fill="url(#wn)" />
            </svg>
          </button>
          <label className="ml-[5px] mr-0.5 flex h-[39px] w-[274px] items-center gap-3 rounded-full border border-[#c6dcb8] border-b-[#a9bf9c] bg-[#f3faec] px-3.5">
            <svg width="19" height="19" viewBox="0 0 20 20" fill="none" stroke="#222" strokeWidth="2" aria-hidden="true"><circle cx="8.500" cy="8.500" r="7" /><path d="M13.500 13.500L19 19" strokeWidth="2.500" /></svg>
            <input aria-label="Search Windows" placeholder="Search" className="w-full bg-transparent text-base outline-none placeholder:text-[#596156]" />
          </label>
          {taskApps.map((a) => (
            <button key={a.name} aria-label={a.name} className="flex w-[55px] justify-center">
              <span className={"flex h-12 w-12 flex-col items-center rounded-[5px] border pt-[7px] " + (a.active ? "border-[#d6e6c8] bg-[#eaf6df]" : "border-transparent")}>
                <span className="grid h-8 place-items-center">{a.svg}</span>
                {a.run && <span className={"mt-1 h-1 shrink-0 rounded-full " + (a.active ? "w-5 bg-[#0a78d6]" : "w-2 bg-[#7d8b72]")} />}
              </span>
            </button>
          ))}
        </div>
        <div className="flex items-center justify-end pr-[26px]">
          <Line d={I.up} s={20} w={1.800} c="mr-5" />
          <svg className="mr-[19px]" width="22" height="20" viewBox="0 0 22 20" fill="none" stroke="#222" strokeWidth="1.500"><path d="M6 16.500a4.500 4.500 0 0 1-.5-9a6 6 0 0 1 11.500 1a4 4 0 0 1 0 8z" fill="#c9c9c9" /><path d="M2 2l17 16" strokeWidth="2" /></svg>
          <svg className="mr-[21px]" width="20" height="20" viewBox="0 0 20 20"><path d="M0 3.500L5 1l5 2.500L15 1l5 2.500L15 6l-5-2.500L5 6z" fill="#111" /><rect x="0.500" y="8.500" width="19" height="11" rx="1" fill="#d8102a" /><text x="10" y="17.500" textAnchor="middle" fontSize="9" fontWeight="700" fill="#fff">19</text></svg>
          <svg className="mr-2.5" width="20" height="20" viewBox="0 0 20 20" fill="none" stroke="#222" strokeWidth="1.400"><path d="M13 1.500H2a1 1 0 0 0-1 1V15a1 1 0 0 0 1 1h13" /><path d="M5 19h8M7 16v3M11 16v3" /><path d="M15 1h4v7h-4zM17 8v11" /></svg>
          <svg className="mr-2.5" width="20" height="20" viewBox="0 0 20 20" fill="none" stroke="#222" strokeWidth="1.300" strokeLinecap="round"><path d="M1 7.500h3L8.500 3.500v13L4 12.500H1z" /><path d="M11.500 7.500a4 4 0 0 1 0 5M14 5a7 7 0 0 1 0 10M16.500 2.500a11 11 0 0 1 0 15" /></svg>
          <svg className="mr-[19px]" width="20" height="20" viewBox="0 0 20 20" fill="none" stroke="#111" strokeWidth="1.400"><rect x="1.500" y="6" width="15.500" height="10.500" rx="2.500" /><path d="M6 8.500h9V14H4z" fill="#111" /><path d="M18.500 9.500v3" strokeWidth="2" /><path d="M4.500 0L1 6h2.500L2 10.500L7.500 4.500H4.500L7 1z" fill="#111" stroke="#d8f0bc" strokeWidth=".5" /></svg>
          <button className="mr-2.5 pb-1 text-right text-[15px] leading-5"><span className="block">13:01</span><span className="block">23/04/2025</span></button>
          <svg width="18" height="20" viewBox="0 0 18 20"><path d="M8 1.500c-4 0-6 2.500-6 6V12L.5 15.500h15L14 12V9" fill="#1c1c1c" /><path d="M5.500 17a2.500 2.500 0 0 0 5 0z" fill="#1c1c1c" /><path d="M5.500 7.500h4L5.500 12.500h4" stroke="#dcf2b5" fill="none" strokeWidth="1.400" /><path d="M11.500 1.500h5L12 7h5" stroke="#1c1c1c" fill="none" strokeWidth="1.500" /></svg>
        </div>
      </footer>
    </div>
  );
}
